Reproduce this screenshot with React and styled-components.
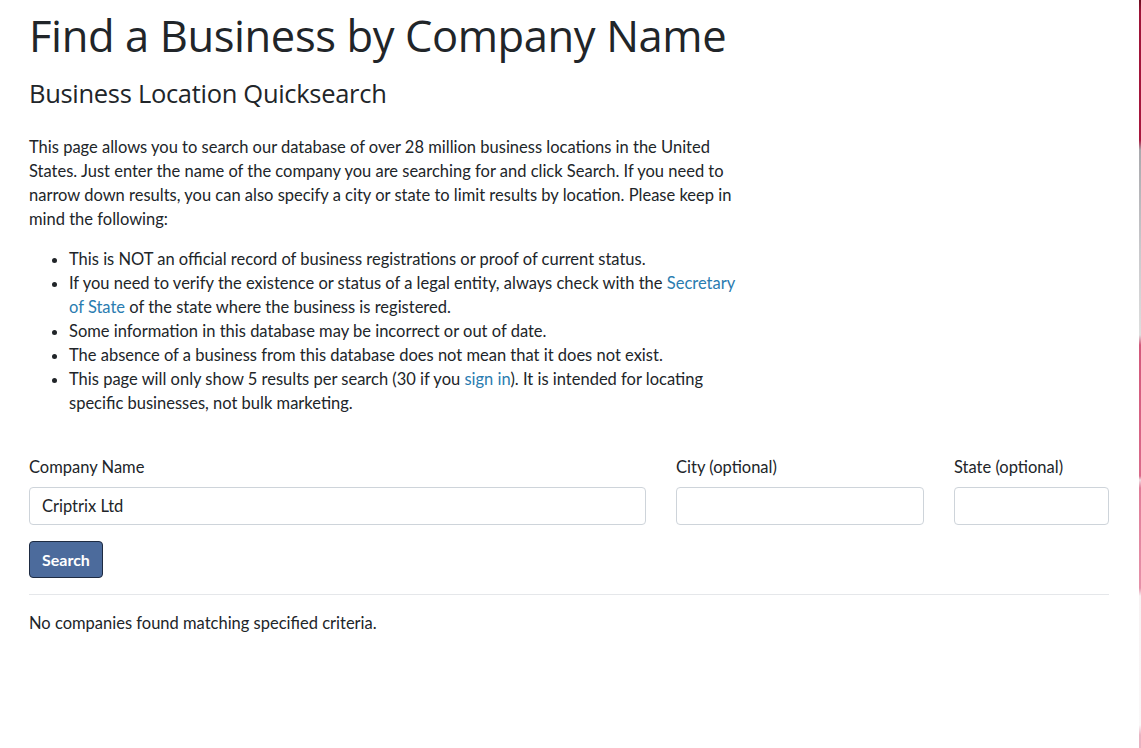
import React from "react";
import styled, { createGlobalStyle } from "styled-components";

const GlobalStyle = createGlobalStyle`
  html, body {
    margin: 0;
    padding: 0;
    background: #ffffff;
  }
  body {
    font-family: "Lato", "Noto Sans", sans-serif;
    font-size: 16.5px;
    line-height: 24px;
    color: #212529;
  }
  * { box-sizing: border-box; }
`;

const Page = styled.main`
  width: 1080px;
  margin-left: 29px;
  padding-top: 8px;
`;

const Title = styled.h1`
  margin: 0;
  font-family: "Open Sans", "Noto Sans", sans-serif;
  font-weight: 400;
  font-size: 43.5px;
  line-height: 56px;
  color: #212529;
  letter-spacing: -0.4px;
`;

const Subtitle = styled.h2`
  margin: 14px 0 0;
  font-family: "Open Sans", "Noto Sans", sans-serif;
  font-weight: 400;
  font-size: 25.5px;
  line-height: 30px;
  color: #212529;
  letter-spacing: -0.3px;
`;

const Intro = styled.div`
  width: 710px;
`;

const Paragraph = styled.p`
  margin: 27px 0 16px;
`;

const Notes = styled.ul`
  margin: 0 0 40px;
  padding-left: 40px;
`;

const Link = styled.a`
  color: #2a7cb0;
  text-decoration: none;
`;

const FormRow = styled.div`
  display: grid;
  grid-template-columns: 617px 248px 155px;
  column-gap: 30px;
`;

const Field = styled.label`
  display: flex;
  flex-direction: column;
  gap: 8px;
`;

const LabelText = styled.span`
  display: block;
`;

const Input = styled.input`
  height: 38px;
  width: 100%;
  padding: 0 12px;
  border: 1px solid #ced4da;
  border-radius: 4px;
  font-family: inherit;
  font-size: 16.5px;
  color: #212529;
  background: #fff;
  outline: none;
`;

const SearchButton = styled.button`
  margin-top: 16px;
  height: 37px;
  padding: 0 12px;
  background: #4c6b9c;
  color: #ffffff;
  border: 1px solid #1e2b42;
  border-radius: 4px;
  font-family: inherit;
  font-size: 16px;
  font-weight: 700;
  cursor: pointer;
`;

const Divider = styled.hr`
  margin: 16px 0 16px;
  border: 0;
  border-top: 1px solid #e5e7ea;
`;

const Result = styled.p`
  margin: 0;
`;

/* thin edge of a neighbouring panel peeking in at the window's right side */
const EdgeStrip = styled.div`
  position: fixed;
  top: 0;
  right: 0;
  width: 2px;
  height: 748px;
  background: linear-gradient(
    to bottom,
    #6a0f1f 0px,
    #9e1438 12px,
    #a8173e 140px,
    #a9a9ad 150px,
    #c9c9cc 250px,
    #dedede 335px,
    #d3587b 345px,
    #da6a8a 476px,
    #f1dde3 480px,
    #e07c98 488px,
    #e691a9 588px,
    #f7f2f3 596px,
    #faf7f8 725px,
    #e9b3c2 735px,
    #e9b3c2 748px
  );
`;

export default function App() {
  return (
    <>
      <GlobalStyle />
      <Page>
        <Title>Find a Business by Company Name</Title>
        <Subtitle>Business Location Quicksearch</Subtitle>
        <Intro>
          <Paragraph>
            This page allows you to search our database of over 28 million
            business locations in the United States. Just enter the name of the
            company you are searching for and click Search. If you need to
            narrow down results, you can also specify a city or state to limit
            results by location. Please keep in mind the following:
          </Paragraph>
          <Notes>
            <li>
              This is NOT an official record of business registrations or proof
              of current status.
            </li>
            <li>
              If you need to verify the existence or status of a legal entity,
              always check with the <Link href="#">Secretary of State</Link> of
              the state where the business is registered.
            </li>
            <li>Some information in this database may be incorrect or out of date.</li>
            <li>
              The absence of a business from this database does not mean that it
              does not exist.
            </li>
            <li>
              This page will only show 5 results per search (30 if you{" "}
              <Link href="#">sign in</Link>). It is intended for locating
              specific businesses, not bulk marketing.
            </li>
          </Notes>
        </Intro>
        <form onSubmit={(e) => e.preventDefault()}>
          <FormRow>
            <Field>
              <LabelText>Company Name</LabelText>
              <Input type="text" defaultValue="Criptrix Ltd" />
            </Field>
            <Field>
              <LabelText>City (optional)</LabelText>
              <Input type="text" />
            </Field>
            <Field>
              <LabelText>State (optional)</LabelText>
              <Input type="text" />
            </Field>
          </FormRow>
          <SearchButton type="submit">Search</SearchButton>
        </form>
        <Divider />
        <Result>No companies found matching specified criteria.</Result>
      </Page>
      <EdgeStrip />
    </>
  );
}
